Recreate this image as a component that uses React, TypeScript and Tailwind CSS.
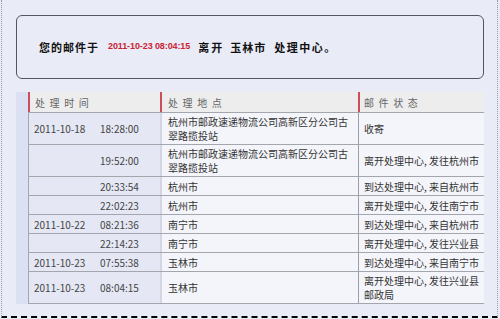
const rows = [
  { date: "2011-10-18", time: "18:28:00", place: ["杭州市邮政速递物流公司高新区分公司古", "翠路揽投站"], status: ["收寄"] },
  { date: "", time: "19:52:00", place: ["杭州市邮政速递物流公司高新区分公司古", "翠路揽投站"], status: ["离开处理中心, 发往杭州市"] },
  { date: "", time: "20:33:54", place: ["杭州市"], status: ["到达处理中心, 来自杭州市"] },
  { date: "", time: "22:02:23", place: ["杭州市"], status: ["离开处理中心, 发往南宁市"] },
  { date: "2011-10-22", time: "08:21:36", place: ["南宁市"], status: ["到达处理中心, 来自杭州市"] },
  { date: "", time: "22:14:23", place: ["南宁市"], status: ["离开处理中心, 发往兴业县"] },
  { date: "2011-10-23", time: "07:55:38", place: ["玉林市"], status: ["到达处理中心, 来自南宁市"] },
  { date: "2011-10-23", time: "08:04:15", place: ["玉林市"], status: ["离开处理中心, 发往兴业县", "邮政局"] },
];

const font = "font-['Noto_Sans_CJK_SC','Noto_Sans',sans-serif]";

export default function App() {
  return (
    <div className={`w-[500px] h-[319px] bg-[#e9ebf7] pl-[1px] ${font}`}>
      <div className="w-[497px] h-[318px] border-l border-r border-dotted border-[#9a9aa6] border-b-2 border-b-black [border-bottom-style:dashed] flex flex-col pl-[14px]">
        {/* Résumé */}
        <div className="mt-[15px] w-[468px] h-[64px] rounded-[6px] border-[1.5px] border-[#55575f] flex items-center pl-[22px] text-[11px] font-bold tracking-[1px] text-[#111]">
          <span>您的邮件于</span>
          <span className="ml-[9px] text-[#cc2233] text-[9px] tracking-[-0.1px] font-['Liberation_Sans',sans-serif]">
            2011-10-23 08:04:15
          </span>
          <span className="ml-[8px] tracking-[2px]">离开</span>
          <span className="ml-[6px]">玉林市</span>
          <span className="ml-[8px] tracking-[1.5px]">处理中心。</span>
        </div>

        {/* Tableau */}
        <div className="mt-[13px] flex w-[468px]">
          <div className="w-[12px] bg-[#dbe0f2]" />
          <div className="w-[456px] text-[10px] leading-[13px]">
            <div className="grid grid-cols-[132px_198px_126px] bg-[#ededee] border-b border-[#a4a6ad] text-[#666] tracking-[4.6px]">
              <div className="border-l-2 border-[#c9505b] py-[3.5px] pl-[5px]">处理时间</div>
              <div className="border-l-2 border-[#c9505b] py-[3.5px] pl-[6px]">处理地点</div>
              <div className="border-l-2 border-[#c9505b] py-[3.5px] pl-[4px]">邮件状态</div>
            </div>
            {rows.map((r, i) => {
              const multi = r.place.length > 1 || r.status.length > 1;
              return (
                <div
                  key={i}
                  className={`grid grid-cols-[132px_198px_126px] border-b border-[#a4a6ad] text-[#333] ${
                    multi ? "h-[32px] leading-[14px]" : ""
                  }`}
                >
                  <div className="bg-[#e5e8f4] border-l border-[#a4a6ad] flex items-center py-[2.5px] pl-[5px] text-[#444]">
                    <span className="w-[66px]">{r.date}</span>
                    <span>{r.time}</span>
                  </div>
                  <div className="bg-[#f4f5fa] border-l-2 border-[#d3d6e2] flex flex-col justify-center pl-[6px]">
                    {r.place.map((p, j) => (
                      <span key={j} className="whitespace-nowrap">{p}</span>
                    ))}
                  </div>
                  <div className="bg-[#f4f5fa] border-l border-[#9c9ea6] flex flex-col justify-center pl-[5px]">
                    {r.status.map((s, j) => (
                      <span key={j} className="whitespace-nowrap">{s}</span>
                    ))}
                  </div>
                </div>
              );
            })}
          </div>
        </div>
      </div>
    </div>
  );
}
